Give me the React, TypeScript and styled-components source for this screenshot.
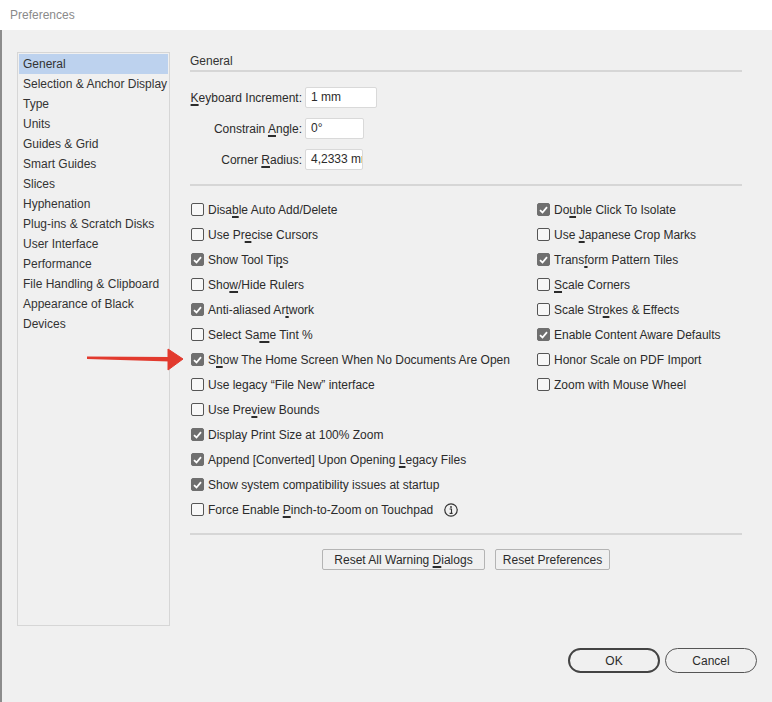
import React from 'react';
import styled, { createGlobalStyle } from 'styled-components';

const GlobalStyle = createGlobalStyle`
  html, body {
    margin: 0;
    padding: 0;
    background: #f0f0f0;
  }
  body {
    font-family: 'Liberation Sans', Arial, sans-serif;
    font-size: 12px;
    color: #2b2b2b;
  }
`;

const Window = styled.div`
  position: relative;
  width: 772px;
  height: 702px;
  overflow: hidden;
  display: flex;
  flex-direction: column;
  background: #f0f0f0;
`;

const TitleBar = styled.div`
  height: 30px;
  flex: none;
  background: #ffffff;
  color: #8a8a8a;
  font-size: 12px;
  line-height: 30px;
  padding-left: 10px;
`;

const Frame = styled.div`
  flex: 1;
  display: flex;
  flex-direction: column;
  border-left: 2px solid #8c8c8c;
`;

const Content = styled.div`
  display: flex;
  gap: 20px;
  padding: 22px 0 0 15px;
`;

const Sidebar = styled.ul`
  list-style: none;
  margin: 0;
  padding: 1px;
  width: 149px;
  height: 570px;
  border: 1px solid #d6d6d6;
  box-sizing: content-box;
`;

const NavItem = styled.li<{ $active?: boolean }>`
  height: 20px;
  line-height: 20px;
  padding-left: 4px;
  background: ${(p) => (p.$active ? '#bdd2ee' : 'transparent')};
  color: #333;
  white-space: nowrap;
`;

const Main = styled.div`
  width: 552px;
  display: flex;
  flex-direction: column;
`;

const SectionTitle = styled.div`
  height: 18px;
  line-height: 18px;
  color: #333;
  border-bottom: 2px solid #d6d6d6;
`;

const Fields = styled.div`
  display: flex;
  flex-direction: column;
  gap: 10px;
  margin-top: 15px;
`;

const FieldRow = styled.div`
  display: flex;
  align-items: center;
  gap: 3px;
`;

const FieldLabel = styled.label`
  width: 112px;
  text-align: right;
  white-space: nowrap;
  color: #2b2b2b;
`;

const TextInput = styled.div<{ $w: number }>`
  width: ${(p) => p.$w}px;
  height: 21px;
  box-sizing: border-box;
  background: #fff;
  border: 1px solid #d9d9d9;
  border-radius: 2px;
  line-height: 19px;
  padding-left: 5px;
  overflow: hidden;
  white-space: nowrap;
  color: #2b2b2b;
`;

const Divider = styled.div<{ $top: number }>`
  height: 2px;
  background: #d6d6d6;
  margin-top: ${(p) => p.$top}px;
`;

const Options = styled.div`
  display: grid;
  grid-template-columns: 346px 1fr;
  margin-top: 11px;
`;

const Column = styled.div`
  display: flex;
  flex-direction: column;
`;

const Option = styled.div`
  height: 25px;
  display: flex;
  align-items: center;
  padding-left: 1px;
  white-space: nowrap;
`;

const Box = styled.span<{ $checked?: boolean }>`
  width: 13px;
  height: 13px;
  box-sizing: border-box;
  flex: none;
  border-radius: 2px;
  border: 1px solid ${(p) => (p.$checked ? '#6f6f6f' : '#555')};
  background: ${(p) => (p.$checked ? '#6f6f6f' : '#f7f7f7')};
  display: flex;
  align-items: center;
  justify-content: center;
  margin-right: 4px;
`;

const Key = styled.span`
  text-decoration: underline;
  text-decoration-thickness: 2px;
  text-underline-offset: 2px;
`;

const InfoIcon = styled.span`
  display: inline-flex;
  width: 14px;
  height: 14px;
  margin-left: 11px;
`;

const ButtonRow = styled.div`
  display: flex;
  justify-content: center;
  gap: 10px;
  margin-top: 14px;
`;

const FlatButton = styled.button<{ $w: number }>`
  width: ${(p) => p.$w}px;
  height: 21px;
  padding: 0;
  font-family: inherit;
  font-size: 12px;
  color: #2b2b2b;
  background: #f0f0f0;
  border: 1px solid #b4b4b4;
  border-radius: 2px;
`;

const Footer = styled.div`
  display: flex;
  justify-content: flex-end;
  gap: 5px;
  padding: 22px 15px 0 0;
`;

const PillButton = styled.button<{ $primary?: boolean }>`
  width: 92px;
  height: 25px;
  padding: 0;
  font-family: inherit;
  font-size: 12px;
  color: #2b2b2b;
  background: #f0f0f0;
  box-sizing: border-box;
  border-radius: 13px;
  border: ${(p) => (p.$primary ? '2px solid #444' : '1px solid #555')};
`;

const Arrow = styled.svg`
  position: absolute;
  left: 84px;
  top: 347px;
`;

type Opt = { pre: string; key?: string; post?: string; checked?: boolean; info?: boolean };

const leftOptions: Opt[] = [
  { pre: 'Disa', key: 'b', post: 'le Auto Add/Delete' },
  { pre: 'Use Pr', key: 'e', post: 'cise Cursors' },
  { pre: 'Show Tool Ti', key: 'p', post: 's', checked: true },
  { pre: 'Sho', key: 'w', post: '/Hide Rulers' },
  { pre: 'Anti-aliased Ar', key: 't', post: 'work', checked: true },
  { pre: 'Select Sa', key: 'm', post: 'e Tint %' },
  { pre: 'S', key: 'h', post: 'ow The Home Screen When No Documents Are Open', checked: true },
  { pre: 'Use legacy “File New” interface' },
  { pre: 'Use Pre', key: 'v', post: 'iew Bounds' },
  { pre: 'Display Print Size at 100% Zoom', checked: true },
  { pre: 'Append [Converted] Upon Opening ', key: 'L', post: 'egacy Files', checked: true },
  { pre: 'Show system compatibility issues at startup', checked: true },
  { pre: 'Force Enable ', key: 'P', post: 'inch-to-Zoom on Touchpad', info: true },
];

const rightOptions: Opt[] = [
  { pre: 'Do', key: 'u', post: 'ble Click To Isolate', checked: true },
  { pre: 'Use ', key: 'J', post: 'apanese Crop Marks' },
  { pre: 'Trans', key: 'f', post: 'orm Pattern Tiles', checked: true },
  { pre: '', key: 'S', post: 'cale Corners' },
  { pre: 'Scale Str', key: 'o', post: 'kes & Effects' },
  { pre: 'Enable Content Aware Defaults', checked: true },
  { pre: 'Honor Scale on PDF Import' },
  { pre: 'Zoom with Mouse Wheel' },
];

const navItems = [
  'General',
  'Selection & Anchor Display',
  'Type',
  'Units',
  'Guides & Grid',
  'Smart Guides',
  'Slices',
  'Hyphenation',
  'Plug-ins & Scratch Disks',
  'User Interface',
  'Performance',
  'File Handling & Clipboard',
  'Appearance of Black',
  'Devices',
];

function Check() {
  return (
    <svg width="9" height="8" viewBox="0 0 9 8">
      <path d="M1 4.2 L3.5 6.5 L8 1.2" fill="none" stroke="#fff" strokeWidth="1.8" />
    </svg>
  );
}

function OptionRow({ o }: { o: Opt }) {
  return (
    <Option>
      <Box $checked={o.checked}>{o.checked && <Check />}</Box>
      <span>
        {o.pre}
        {o.key && <Key>{o.key}</Key>}
        {o.post}
      </span>
      {o.info && (
        <InfoIcon>
          <svg width="14" height="14" viewBox="0 0 14 14">
            <circle cx="7" cy="7" r="6.2" fill="none" stroke="#333" strokeWidth="1.2" />
            <circle cx="7" cy="4" r="0.9" fill="#333" />
            <path d="M5.6 6 H7.5 V10.2 M5.6 10.4 H8.6" fill="none" stroke="#333" strokeWidth="1.1" />
          </svg>
        </InfoIcon>
      )}
    </Option>
  );
}

export default function App() {
  return (
    <Window>
      <GlobalStyle />
      <TitleBar>Preferences</TitleBar>
      <Frame>
        <Content>
          <Sidebar>
            {navItems.map((n, i) => (
              <NavItem key={n} $active={i === 0}>
                {n}
              </NavItem>
            ))}
          </Sidebar>
          <Main>
            <SectionTitle>General</SectionTitle>
            <Fields>
              <FieldRow>
                <FieldLabel>
                  <Key>K</Key>eyboard Increment:
                </FieldLabel>
                <TextInput $w={72}>1 mm</TextInput>
              </FieldRow>
              <FieldRow>
                <FieldLabel>
                  Constrain <Key>A</Key>ngle:
                </FieldLabel>
                <TextInput $w={59}>0°</TextInput>
              </FieldRow>
              <FieldRow>
                <FieldLabel>
                  Corner <Key>R</Key>adius:
                </FieldLabel>
                <TextInput $w={58}>4,2333 mm</TextInput>
              </FieldRow>
            </Fields>
            <Divider $top={14} />
            <Options>
              <Column>
                {leftOptions.map((o, i) => (
                  <OptionRow key={i} o={o} />
                ))}
              </Column>
              <Column>
                {rightOptions.map((o, i) => (
                  <OptionRow key={i} o={o} />
                ))}
              </Column>
            </Options>
            <Divider $top={11} />
            <ButtonRow>
              <FlatButton $w={163}>
                Reset All Warning <Key>D</Key>ialogs
              </FlatButton>
              <FlatButton $w={115}>Reset Preferences</FlatButton>
            </ButtonRow>
          </Main>
        </Content>
        <Footer>
          <PillButton $primary>OK</PillButton>
          <PillButton>Cancel</PillButton>
        </Footer>
      </Frame>
      <Arrow width="102" height="26" viewBox="0 0 102 26">
        <path d="M3 9.5 L86 10 L86 14.5 L3 12 Z" fill="#e23a2e" />
        <path d="M84 2 L99 12 L84 23 Z" fill="#e23a2e" strokeLinejoin="round" stroke="#e23a2e" strokeWidth="1" />
      </Arrow>
    </Window>
  );
}
